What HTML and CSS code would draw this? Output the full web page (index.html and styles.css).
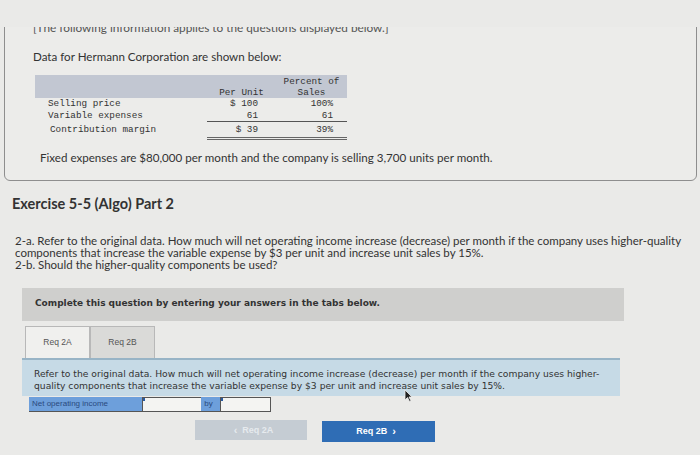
FILE: index.html
```html
<!DOCTYPE html>
<html>
<head>
<meta charset="utf-8">
<link rel="stylesheet" href="styles.css">
</head>
<body>
<div class="clip">
  <div class="box">
    <p class="intro">[The following information applies to the questions displayed below.]</p>
    <p class="data">Data for Hermann Corporation are shown below:</p>
    <div class="cm">
      <div class="row head">
        <div class="lbl">&nbsp;</div>
        <div class="pu">Per Unit</div>
        <div class="pct">Percent of<br>Sales</div>
      </div>
      <div class="row">
        <div class="lbl">Selling price</div>
        <div class="pu num">$ 100</div>
        <div class="pct num">100%</div>
      </div>
      <div class="row sub">
        <div class="lbl">Variable expenses</div>
        <div class="pu num">61</div>
        <div class="pct num">61</div>
      </div>
      <div class="row tot">
        <div class="lbl">Contribution margin</div>
        <div class="pu num">$ 39</div>
        <div class="pct num">39%</div>
      </div>
    </div>
    <p class="fixed">Fixed expenses are $80,000 per month and the company is selling 3,700 units per month.</p>
  </div>
</div>

<div class="main">
  <h2 class="title">Exercise 5-5 (Algo) Part 2</h2>
  <p class="question">2-a. Refer to the original data. How much will net operating income increase (decrease) per month if the company uses higher-quality<br>components that increase the variable expense by $3 per unit and increase unit sales by 15%.<br>2-b. Should the higher-quality components be used?</p>

  <div class="complete">Complete this question by entering your answers in the tabs below.</div>

  <div class="tabs">
    <div class="tab active">Req 2A</div>
    <div class="tab">Req 2B</div>
  </div>
  <div class="instr">Refer to the original data. How much will net operating income increase (decrease) per month if the company uses higher-<br>quality components that increase the variable expense by $3 per unit and increase unit sales by 15%.</div>

  <div class="answer">
    <div class="alabel">Net operating income</div>
    <div class="ainput wide"><span class="mark"></span></div>
    <div class="alabel by">by</div>
    <div class="ainput narrow"><span class="mark"></span></div>
  </div>

  <div class="nav">
    <div class="btn prev"><span class="chev">‹</span> Req 2A</div>
    <div class="btn next">Req 2B <span class="chev">›</span></div>
  </div>
</div>

<svg class="cursor" width="9" height="13" viewBox="0 0 9 13"><path d="M1 1 L1 11 L3.5 8.5 L5.5 12.5 L7 11.8 L5 8 L8 8 Z" fill="#222" stroke="#eee" stroke-width="0.8"/></svg>
</body>
</html>
```

FILE: styles.css
```css
body {
  margin: 0;
  width: 700px;
  height: 455px;
  overflow: hidden;
  position: relative;
  background: #eaeae8;
  font-family: Lato, "Open Sans", sans-serif;
  color: #333;
}

p { margin: 0; }

.clip {
  margin-top: 27px;
  overflow: hidden;
  padding: 0 3px 0 4px;
}

.box {
  margin-top: -22px;
  border: 1px solid #8e8e8e;
  border-radius: 6px;
  padding: 14px 0 15px 28px;
  background: #ececea;
}

.intro {
  font-size: 11.8px;
  line-height: 15px;
  color: #555;
}

.data {
  margin-top: 14px;
  font-size: 11.6px;
  line-height: 15px;
  color: #333;
}

.cm {
  margin: 11px 0 0 2px;
  width: 312px;
  font-family: "Liberation Mono", monospace;
  font-size: 9.3px;
  color: #333;
  background: linear-gradient(#c2c7d2, #c2c7d2) no-repeat 0 0 / 312px 23px;
}

.row {
  display: grid;
  grid-template-columns: 172px 69px 71px;
  line-height: 12px;
}

.row .lbl { padding-left: 13px; }
.row .num { text-align: right; }
.row .pu.num { padding-right: 18px; }
.row .pct.num { padding-right: 14px; }

.head {
  background: #c2c7d2;
  height: 23px;
  line-height: 11px;
  align-items: end;
}

.head .pu, .head .pct { text-align: center; }

.sub { line-height: 11px; }
.sub .num { border-bottom: 1px solid #555; }

.tot { line-height: 14px; padding-top: 1px; }
.tot .lbl { padding-left: 15px; }
.tot .num { border-bottom: 3px double #666; }

.fixed {
  margin: 9.5px 0 0 7px;
  font-size: 11.6px;
  line-height: 15px;
  color: #333;
}

.main {
  padding-left: 12px;
}

.title {
  margin: 14px 0 0;
  font-size: 14.5px;
  line-height: 18px;
  font-weight: bold;
  color: #333;
}

.question {
  margin: 22px 0 0 3px;
  font-size: 11.5px;
  line-height: 12px;
  color: #333;
}

.complete {
  margin: 17px 0 0 10px;
  width: 602px;
  height: 33px;
  box-sizing: border-box;
  background: #cfcfcd;
  padding: 9px 0 0 13px;
  font-family: "DejaVu Sans", Verdana, sans-serif;
  font-weight: bold;
  font-size: 9px;
  line-height: 12px;
  color: #333;
}

.tabs {
  display: flex;
  margin: 5px 0 0 13px;
}

.tab {
  width: 65px;
  height: 32px;
  box-sizing: border-box;
  border: 1px solid #b8b8b8;
  border-bottom: none;
  background: #dadad8;
  font-family: "Liberation Sans", Arial, sans-serif;
  font-size: 8.5px;
  color: #555;
  display: flex;
  align-items: center;
  justify-content: center;
}

.tab.active {
  background: #f0f0ee;
}

.instr {
  margin-left: 10px;
  width: 598px;
  height: 38px;
  box-sizing: border-box;
  background: #c6dae6;
  border-top: 2px solid #98b4c6;
  padding: 8px 0 0 12px;
  font-family: "DejaVu Sans", Verdana, sans-serif;
  font-size: 9.2px;
  line-height: 12px;
  color: #333;
}

.answer {
  display: flex;
  margin: 1px 0 0 17px;
  width: 242px;
  height: 15px;
  border: 1px solid #555;
  box-sizing: border-box;
  border-left: none;
  border-top: none;
}

.alabel {
  width: 113px;
  background: #6d9fdb;
  font-family: "Liberation Sans", Arial, sans-serif;
  font-size: 8px;
  line-height: 14px;
  color: #2a4a7e;
  padding-left: 3px;
  box-sizing: border-box;
}

.alabel.by { width: 19px; }

.ainput {
  position: relative;
  background: #f4f4f2;
  border-left: 1px solid #555;
  border-top: 1px solid #555;
  box-sizing: border-box;
}

.ainput.wide { width: 60px; }
.ainput.narrow { width: 50px; }

.mark {
  position: absolute;
  left: 0;
  top: 0;
  width: 2px;
  height: 3px;
  background: #2a5aa0;
}

.nav {
  display: flex;
  gap: 15px;
  margin: 8px 0 0 183px;
}

.btn {
  width: 112px;
  height: 21px;
  display: flex;
  align-items: center;
  justify-content: center;
  font-family: "Liberation Sans", Arial, sans-serif;
  font-size: 9px;
  font-weight: bold;
}

.btn .chev { font-size: 11px; margin: 0 5px; }

.btn.prev {
  background: #c5ccd3;
  color: #e6eaee;
  height: 20px;
}

.btn.next {
  width: 113px;
  background: #2f6db5;
  color: #fff;
  margin-top: 1px;
}

.cursor {
  position: absolute;
  left: 404px;
  top: 389px;
}
```
